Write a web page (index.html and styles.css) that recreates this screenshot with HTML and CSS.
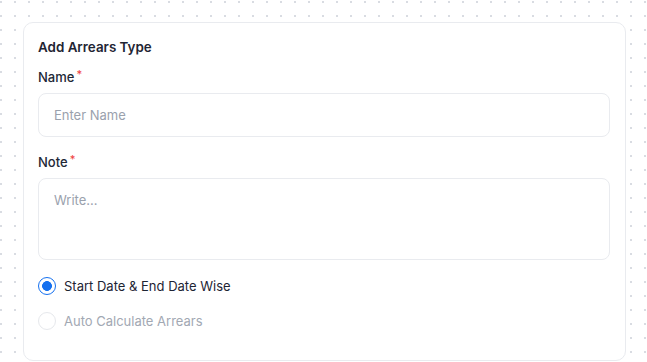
FILE: index.html
```html
<!DOCTYPE html>
<html lang="en">
<head>
<meta charset="utf-8">
<title>Add Arrears Type</title>
<link rel="stylesheet" href="styles.css">
</head>
<body>
<div class="card">
  <h2 class="title">Add Arrears Type</h2>
  <label class="label" for="name">Name<span class="req">*</span></label>
  <input class="field" id="name" type="text" placeholder="Enter Name">
  <label class="label label-note" for="note">Note<span class="req">*</span></label>
  <textarea class="field area" id="note" placeholder="Write..."></textarea>
  <div class="options">
    <div class="option">
      <span class="radio checked"></span>
      <span class="opt-text">Start Date &amp; End Date Wise</span>
    </div>
    <div class="option disabled">
      <span class="radio"></span>
      <span class="opt-text">Auto Calculate Arrears</span>
    </div>
  </div>
</div>
</body>
</html>
```
FILE: styles.css
```css
html, body {
  margin: 0;
  padding: 0;
}
body {
  width: 647px;
  height: 362px;
  overflow: hidden;
  font-family: Inter, "Noto Sans", sans-serif;
  background-color: #ffffff;
  background-image: radial-gradient(circle at center, #d9dce2 0.9px, transparent 1.4px);
  background-size: 14px 14px;
  background-position: -6px -5px;
}
.card {
  box-sizing: border-box;
  margin: 22px 0 0 23px;
  width: 603px;
  height: 339px;
  background: #ffffff;
  border: 1px solid #e9ebef;
  border-radius: 10px;
  padding: 14px 15px 0 14px;
  display: flex;
  flex-direction: column;
}
.title {
  margin: 0;
  font-size: 13.4px;
  line-height: 20px;
  font-weight: 600;
  color: #1f2533;
}
.label {
  margin-top: 10px;
  font-size: 13px;
  line-height: 20px;
  font-weight: 500;
  color: #222836;
  display: flex;
  align-items: flex-start;
}
.label-note {
  margin-top: 15px;
}
.req {
  color: #ef4444;
  font-size: 11px;
  line-height: 15px;
  margin-left: 2px;
}
.field {
  box-sizing: border-box;
  margin-top: 6px;
  width: 100%;
  height: 44px;
  border: 1px solid #e9ebef;
  border-radius: 8px;
  padding: 0 15px;
  font-family: Inter, "Noto Sans", sans-serif;
  font-size: 13px;
  color: #1d2433;
  background: #ffffff;
  outline: none;
}
.field::placeholder {
  color: #9aa1ad;
}
.area {
  height: 82px;
  padding: 11px 15px;
  line-height: 20px;
  resize: none;
  display: block;
}
.options {
  margin-top: 17px;
  display: flex;
  flex-direction: column;
  gap: 16.5px;
}
.option {
  display: flex;
  align-items: center;
  gap: 8px;
  height: 18px;
}
.radio {
  box-sizing: border-box;
  width: 18px;
  height: 18px;
  border-radius: 50%;
  border: 1px solid #e6e8ec;
  background: #ffffff;
  flex: none;
}
.radio.checked {
  border: 1.5px solid #1570ef;
  background: radial-gradient(circle at center, #1570ef 0, #1570ef 4.6px, #ffffff 5.2px);
}
.opt-text {
  font-size: 13px;
  line-height: 18px;
  color: #1d2433;
}
.disabled .opt-text {
  color: #a2a8b3;
}
```
